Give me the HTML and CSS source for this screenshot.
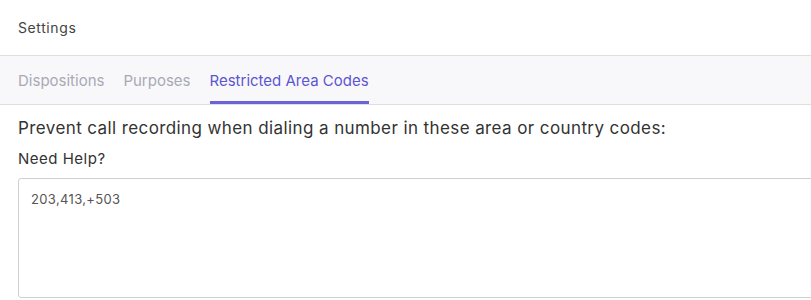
FILE: index.html
```html
<!DOCTYPE html>
<html>
<head>
<meta charset="utf-8">
<link rel="stylesheet" href="styles.css">
</head>
<body>
<div class="header">Settings</div>
<nav class="tabs">
  <a class="tab">Dispositions</a>
  <a class="tab">Purposes</a>
  <a class="tab active">Restricted Area Codes</a>
</nav>
<main class="content">
  <p class="lead">Prevent call recording when dialing a number in these area or country codes:</p>
  <p class="help">Need Help?</p>
  <div class="codes">203,413,+503</div>
</main>
</body>
</html>
```
FILE: styles.css
```css
* { box-sizing: border-box; }
body {
  margin: 0;
  font-family: Inter, "Noto Sans", sans-serif;
  background: #fff;
  color: #333;
  overflow: hidden;
}
.header {
  height: 56px;
  padding-left: 18px;
  display: flex;
  align-items: center;
  font-size: 14px;
  letter-spacing: 0.6px;
  color: #444;
  border-bottom: 1px solid #dedede;
}
.tabs {
  height: 49px;
  background: #f8f8fa;
  border-bottom: 1px solid #dedede;
  display: flex;
  gap: 19px;
  padding-left: 18px;
}
.tab {
  display: flex;
  align-items: center;
  font-size: 15px;
  color: #a9a9b6;
  border-bottom: 3px solid transparent;
  padding-top: 3px;
}
.tab.active {
  color: #5c55d2;
  border-bottom-color: #6b62d9;
}
.content {
  padding: 0 0 0 18px;
}
.lead {
  margin: 12px 0 0;
  font-size: 17px;
  letter-spacing: 0.4px;
  line-height: 22px;
  color: #333;
}
.help {
  margin: 10px 0 0;
  font-size: 15px;
  letter-spacing: 0.5px;
  line-height: 20px;
  color: #333;
}
.codes {
  margin-top: 9px;
  height: 120px;
  width: 820px;
  border: 1px solid #cfcfcf;
  border-radius: 3px;
  padding: 12px 12px;
  font-size: 13px;
  letter-spacing: 0.35px;
  color: #555;
}
```
